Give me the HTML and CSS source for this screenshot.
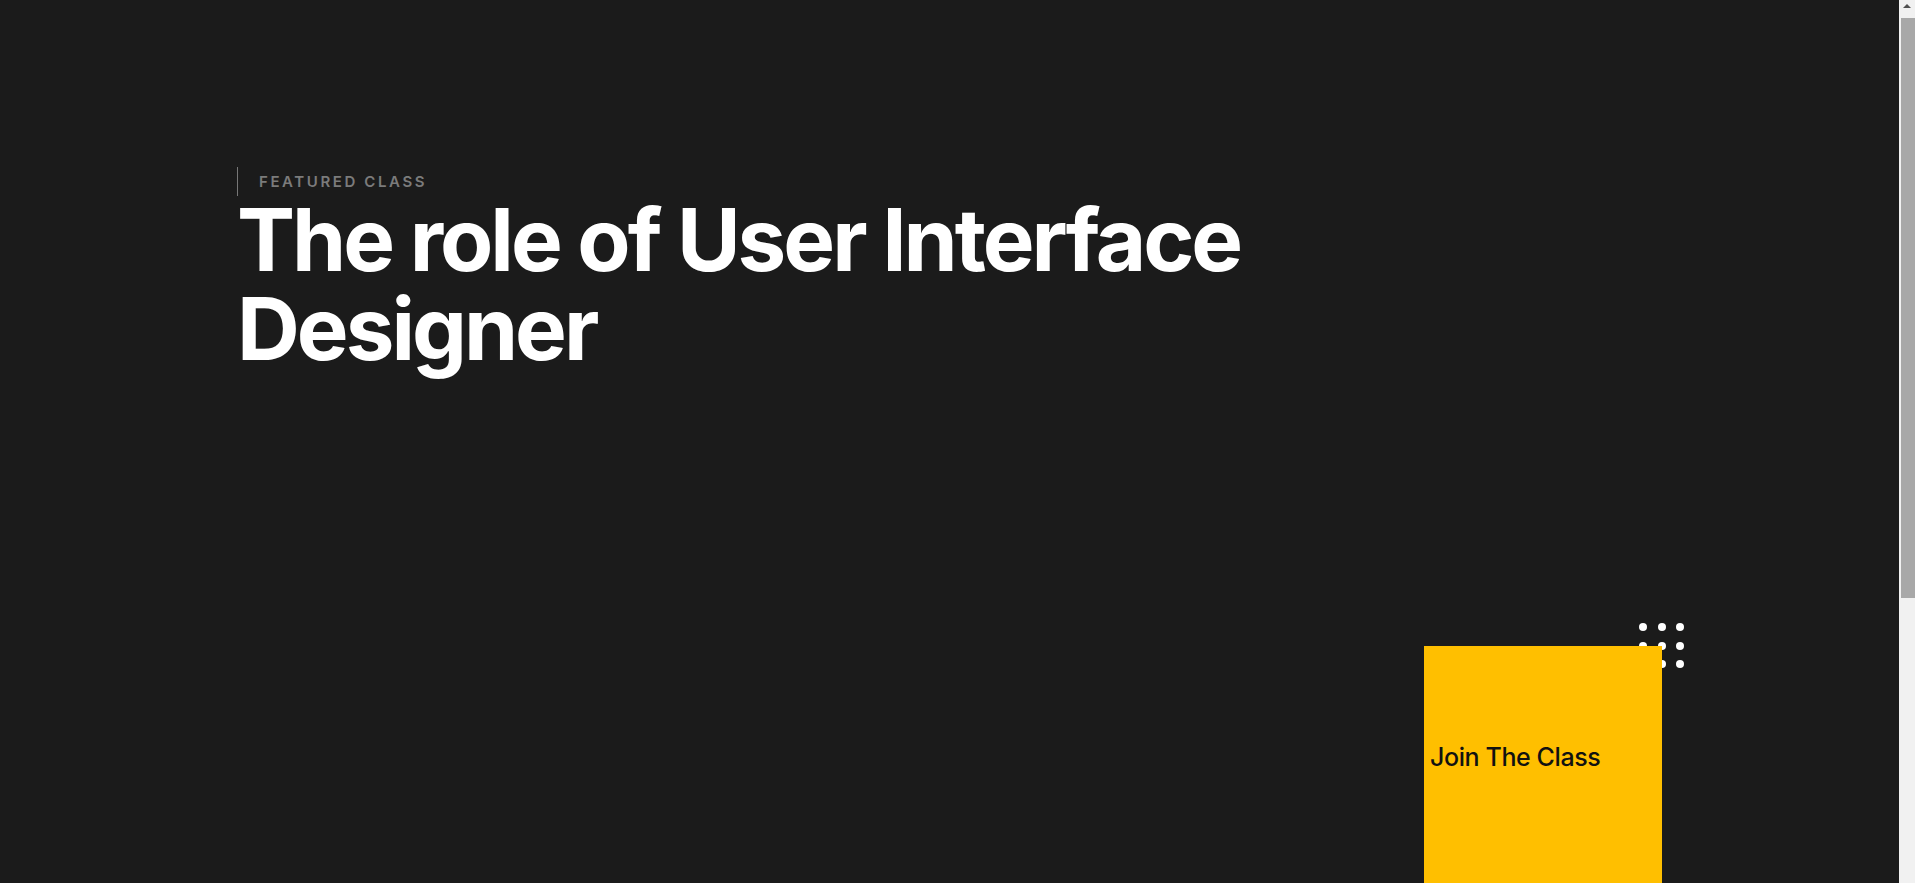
FILE: index.html
```html
<!DOCTYPE html>
<html lang="en">
<head>
<meta charset="utf-8">
<title>Featured Class</title>
<link rel="stylesheet" href="styles.css">
</head>
<body>
<main class="page">
  <section class="hero">
    <p class="eyebrow">FEATURED CLASS</p>
    <h1 class="title">The role of User Interface<br>Designer</h1>
  </section>
  <section class="cta-row">
    <div class="cta-wrap">
      <div class="dots" aria-hidden="true">
        <span></span><span></span><span></span>
        <span></span><span></span><span></span>
        <span></span><span></span><span></span>
      </div>
      <a class="cta" href="#">Join The Class</a>
    </div>
  </section>
</main>
<div class="scrollbar" aria-hidden="true">
  <div class="scroll-up"></div>
  <div class="scroll-thumb"></div>
</div>
</body>
</html>
```
FILE: styles.css
```css
html, body {
  margin: 0;
  padding: 0;
  background: #1b1b1b;
}

body {
  font-family: Inter, "Liberation Sans", sans-serif;
  color: #ffffff;
}

.page {
  padding: 167px 253px 410px 237px;
}

.hero {
  display: flex;
  flex-direction: column;
}

.eyebrow {
  margin: 0;
  height: 29px;
  line-height: 29px;
  border-left: 1px solid #777777;
  padding-left: 21px;
  font-size: 15px;
  font-weight: 600;
  letter-spacing: 2.6px;
  color: #7b7b7b;
}

.title {
  margin: 0;
  font-size: 87px;
  line-height: 89px;
  font-weight: 700;
  letter-spacing: -3px;
  color: #ffffff;
  position: relative;
  top: -1px;
}

.cta-row {
  display: flex;
  justify-content: flex-end;
  margin-top: 272px;
}

.cta-wrap {
  position: relative;
  width: 238px;
  height: 237px;
}

.dots {
  position: absolute;
  top: -23px;
  left: 215px;
  display: grid;
  grid-template-columns: repeat(3, 8px);
  grid-auto-rows: 8px;
  gap: 10.5px;
  z-index: 0;
}

.dots span {
  display: block;
  width: 8px;
  height: 8px;
  border-radius: 50%;
  background: #ffffff;
}

.cta {
  position: relative;
  z-index: 1;
  display: flex;
  align-items: flex-start;
  box-sizing: border-box;
  width: 238px;
  height: 237px;
  padding: 96px 0 0 6px;
  background: #ffbf00;
  color: #111111;
  font-size: 25px;
  font-weight: 500;
  letter-spacing: -0.4px;
  text-decoration: none;
}

.scrollbar {
  position: fixed;
  top: 0;
  right: 0;
  width: 16px;
  height: 100vh;
  background: #f1f1f1;
  z-index: 10;
}

.scroll-up {
  width: 0;
  height: 0;
  margin: 4px auto 0 auto;
  border-left: 4px solid transparent;
  border-right: 4px solid transparent;
  border-bottom: 4px solid #505050;
}

.scroll-thumb {
  margin: 10px 0 0 2px;
  width: 14px;
  height: 580px;
  background: #a8a8a8;
}
```
